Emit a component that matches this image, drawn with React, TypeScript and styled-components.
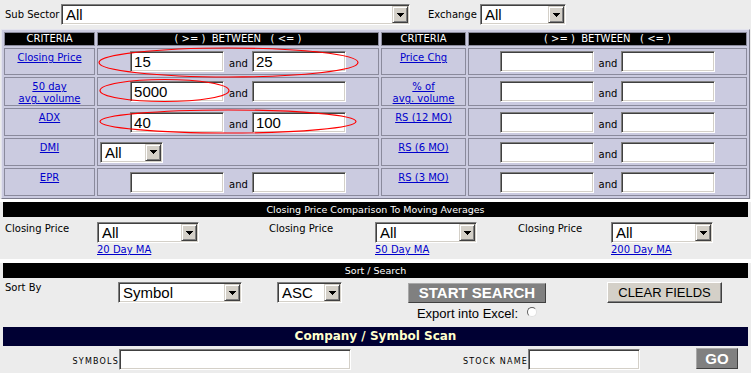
import React from 'react';
import styled, { createGlobalStyle } from 'styled-components';

const FONT_UI = `"DejaVu Sans", Verdana, sans-serif`;
const FONT_FORM = `"Liberation Sans", Arial, sans-serif`;

const GlobalStyle = createGlobalStyle`
  html, body {
    margin: 0;
    padding: 0;
    background: #ececec;
  }
  body {
    font-family: ${FONT_UI};
    font-size: 10px;
    color: #000;
  }
`;

const Page = styled.div`
  position: relative;
  width: 751px;
  height: 373px;
  overflow: hidden;
  background: #ececec;
`;

/* ---------- form widgets ---------- */

const SelectBox = styled.div<{ $w: number }>`
  box-sizing: border-box;
  width: ${(p) => p.$w}px;
  height: 21px;
  padding: 1px;
  display: flex;
  background: #fff;
  border: 1px solid;
  border-color: #808080 #fff #fff #808080;
  box-shadow: inset 1px 1px 0 #404040, inset -1px -1px 0 #d4d0c8;
`;

const SelectValue = styled.span`
  flex: 1;
  padding-left: 3px;
  font-family: ${FONT_FORM};
  font-size: 15px;
  line-height: 17px;
  overflow: hidden;
  white-space: nowrap;
`;

const ArrowButton = styled.span`
  box-sizing: border-box;
  width: 16px;
  height: 17px;
  display: flex;
  align-items: center;
  justify-content: center;
  background: #d4d0c8;
  border: 1px solid;
  border-color: #d4d0c8 #404040 #404040 #d4d0c8;
  box-shadow: inset 1px 1px 0 #fff, inset -1px -1px 0 #808080;
`;

const TextBox = styled.input<{ $w: number }>`
  box-sizing: border-box;
  width: ${(p) => p.$w}px;
  height: 21px;
  margin: 0;
  padding: 0 3px;
  background: #fff;
  border: 1px solid;
  border-color: #808080 #fff #fff #808080;
  box-shadow: inset 1px 1px 0 #404040, inset -1px -1px 0 #d4d0c8;
  font-family: ${FONT_FORM};
  font-size: 15px;
  color: #000;
  outline: none;
`;

const ArrowIcon = () => (
  <svg width="7" height="4" viewBox="0 0 7 4" shapeRendering="crispEdges">
    <path d="M0 0h7v1H0zM1 1h5v1H1zM2 2h3v1H2zM3 3h1v1H3z" fill="#000" />
  </svg>
);

const Dropdown: React.FC<{ value: string; width: number }> = ({ value, width }) => (
  <SelectBox $w={width}>
    <SelectValue>{value}</SelectValue>
    <ArrowButton>
      <ArrowIcon />
    </ArrowButton>
  </SelectBox>
);

/* ---------- top filter bar ---------- */

const TopBar = styled.div`
  display: flex;
  align-items: center;
  height: 29px;
  padding-left: 5px;
`;

const TopLabel = styled.span<{ $w: number; $ml?: number }>`
  width: ${(p) => p.$w}px;
  margin-left: ${(p) => p.$ml ?? 0}px;
  font-size: 10px;
  white-space: nowrap;
`;

/* ---------- criteria table ---------- */

const CriteriaWrap = styled.div`
  position: relative;
  padding-left: 1px;
`;

const CriteriaTable = styled.table`
  width: 749px;
  table-layout: fixed;
  border-collapse: separate;
  border-spacing: 2px;
  background: #cbcbe0;
  border: 1px solid;
  border-color: #e4e4ee #7c7c8c #7c7c8c #e4e4ee;
`;

const HeadCell = styled.th<{ $w: number }>`
  box-sizing: border-box;
  width: ${(p) => p.$w}px;
  height: 14px;
  padding: 0;
  background: #000;
  color: #fff;
  font-weight: normal;
  font-size: 10px;
  line-height: 12px;
  text-align: center;
  white-space: pre;
  border: 1px solid #8a8a9c;
`;

const Row = styled.tr<{ $h: number }>`
  height: ${(p) => p.$h}px;
`;

const LabelCell = styled.td`
  padding: 3px 2px 0;
  vertical-align: top;
  text-align: center;
  font-size: 10px;
  line-height: 12px;
  border: 1px solid #8a8a9c;
`;

const RangeCell = styled.td<{ $left?: boolean }>`
  padding: 0 0 0 ${(p) => (p.$left ? 2 : 0)}px;
  vertical-align: middle;
  border: 1px solid #8a8a9c;
`;

const Range = styled.div`
  display: flex;
  justify-content: center;
  align-items: baseline;
`;

const And = styled.span`
  margin: 0 4px 0 5px;
  font-size: 10px;
`;

const Link = styled.a`
  color: #0000cc;
  text-decoration: underline;
  font-size: 10px;
  line-height: 12px;
`;

const MaLink = styled(Link)`
  margin-top: 1px;
`;

const Ellipses = styled.svg`
  position: absolute;
  top: 0;
  left: 0;
  pointer-events: none;
`;

/* ---------- section bars ---------- */

const WhiteGap = styled.div<{ $h: number }>`
  height: ${(p) => p.$h}px;
  background: #fff;
`;

const SectionBar = styled.div`
  margin: 0 3px;
  height: 15px;
  background: #000;
  color: #fff;
  text-align: center;
  font-size: 9.5px;
  line-height: 15px;
`;

const ScanBar = styled.div`
  margin: 0 3px;
  height: 19px;
  background: #000033;
  color: #ffffcc;
  text-align: center;
  font-size: 12px;
  font-weight: bold;
  line-height: 19px;
`;

/* ---------- moving average row ---------- */

const MaSection = styled.div`
  display: grid;
  grid-template-columns: 92px 172px 106px 143px 93px 1fr;
  align-items: start;
  height: 42px;
  box-sizing: border-box;
  padding: 5px 0 3px 5px;
`;

const PlainLabel = styled.span`
  padding-top: 1px;
  font-size: 10px;
  line-height: 12px;
  white-space: nowrap;
`;

const MaCell = styled.div`
  display: flex;
  flex-direction: column;
  align-items: flex-start;
`;

/* ---------- sort / search ---------- */

const SortSection = styled.div`
  display: grid;
  grid-template-columns: 113px 159px 131px 138px 61px 115px;
  grid-template-rows: 21px auto;
  row-gap: 3px;
  align-items: start;
  height: 49px;
  box-sizing: border-box;
  padding: 4px 0 0 5px;
`;

const SortLabel = styled.span`
  font-size: 10px;
  line-height: 12px;
`;

const GreyButton = styled.button<{ $w: number }>`
  box-sizing: border-box;
  width: ${(p) => p.$w}px;
  height: 20px;
  margin: 1px 0 0;
  padding: 0;
  background: #808080;
  color: #fff;
  font-family: ${FONT_FORM};
  font-size: 15px;
  font-weight: bold;
  line-height: 18px;
  border: 1px solid;
  border-color: #a8a8a8 #404040 #404040 #a8a8a8;
`;

const FaceButton = styled.button`
  box-sizing: border-box;
  width: 115px;
  height: 21px;
  margin: 0;
  padding: 0;
  background: #d4d0c8;
  color: #000;
  font-family: ${FONT_FORM};
  font-size: 13px;
  line-height: 19px;
  border: 1px solid;
  border-color: #fff #404040 #404040 #fff;
  box-shadow: inset -1px -1px 0 #808080;
`;

const ExportLine = styled.div`
  grid-column: 4;
  grid-row: 2;
  justify-self: center;
  display: flex;
  align-items: flex-start;
  gap: 9px;
  font-family: ${FONT_FORM};
  font-size: 13px;
  line-height: 15px;
  white-space: nowrap;
`;

const Radio = styled.span`
  box-sizing: border-box;
  width: 10px;
  height: 10px;
  margin-top: 1px;
  border-radius: 50%;
  background: #fff;
  border: 1px solid;
  border-color: #606060 #e0e0e0 #e0e0e0 #606060;
`;

/* ---------- symbol scan ---------- */

const ScanSection = styled.div`
  display: grid;
  grid-template-columns: 119px 232px 177px 112px 56px 42px;
  height: 28px;
  box-sizing: border-box;
  padding-top: 3px;
`;

const CapsLabel = styled.span`
  justify-self: end;
  align-self: end;
  margin-bottom: 7px;
  font-size: 8px;
  line-height: 10px;
  letter-spacing: 1.2px;
  white-space: nowrap;
`;

const GoButton = styled(GreyButton)`
  grid-column: 6;
  height: 21px;
  margin-top: -1px;
`;

type Criterion = {
  label: string[];
  from?: string;
  to?: string;
  dropdown?: boolean;
};

const leftCriteria: Criterion[] = [
  { label: ['Closing Price'], from: '15', to: '25' },
  { label: ['50 day', 'avg. volume'], from: '5000', to: '' },
  { label: ['ADX'], from: '40', to: '100' },
  { label: ['DMI'], dropdown: true },
  { label: ['EPR'], from: '', to: '' },
];

const rightCriteria: Criterion[] = [
  { label: ['Price Chg'] },
  { label: ['% of', 'avg. volume'] },
  { label: ['RS (12 MO)'] },
  { label: ['RS (6 MO)'] },
  { label: ['RS (3 MO)'] },
];

const rowHeights = [27, 28, 28, 28, 28];

const BETWEEN = '( >= )  BETWEEN   ( <= )';

const CriterionLabel: React.FC<{ lines: string[] }> = ({ lines }) => (
  <LabelCell>
    <Link href="#">
      {lines.map((line, i) => (
        <React.Fragment key={line}>
          {i > 0 && <br />}
          {line}
        </React.Fragment>
      ))}
    </Link>
  </LabelCell>
);

const RangeInputs: React.FC<{ from?: string; to?: string }> = ({ from = '', to = '' }) => (
  <Range>
    <TextBox $w={94} defaultValue={from} />
    <And>and</And>
    <TextBox $w={94} defaultValue={to} />
  </Range>
);

const maColumns = [
  { label: 'Closing Price', link: '20 Day MA' },
  { label: 'Closing Price', link: '50 Day MA' },
  { label: 'Closing Price', link: '200 Day MA' },
];

const App: React.FC = () => {
  return (
    <Page>
      <GlobalStyle />
      <TopBar>
        <TopLabel $w={56}>Sub Sector</TopLabel>
        <Dropdown value="All" width={349} />
        <TopLabel $w={52} $ml={18}>
          Exchange
        </TopLabel>
        <Dropdown value="All" width={86} />
      </TopBar>

      <CriteriaWrap>
        <CriteriaTable>
          <thead>
            <tr>
              <HeadCell $w={91}>CRITERIA</HeadCell>
              <HeadCell $w={282}>{BETWEEN}</HeadCell>
              <HeadCell $w={85}>CRITERIA</HeadCell>
              <HeadCell $w={279}>{BETWEEN}</HeadCell>
            </tr>
          </thead>
          <tbody>
            {leftCriteria.map((left, i) => (
              <Row key={left.label[0]} $h={rowHeights[i]}>
                <CriterionLabel lines={left.label} />
                {left.dropdown ? (
                  <RangeCell $left>
                    <Dropdown value="All" width={63} />
                  </RangeCell>
                ) : (
                  <RangeCell>
                    <RangeInputs from={left.from} to={left.to} />
                  </RangeCell>
                )}
                <CriterionLabel lines={rightCriteria[i].label} />
                <RangeCell>
                  <RangeInputs />
                </RangeCell>
              </Row>
            ))}
          </tbody>
        </CriteriaTable>
        <Ellipses width="751" height="170">
          <g fill="none" stroke="#ff0000" strokeWidth="1.2">
            <ellipse cx="228.5" cy="33.5" rx="129.5" ry="14.5" />
            <ellipse cx="164.5" cy="61.5" rx="64.5" ry="11" />
            <ellipse cx="228" cy="92.5" rx="128" ry="11.5" />
          </g>
        </Ellipses>
      </CriteriaWrap>

      <WhiteGap $h={3} />
      <SectionBar>Closing Price Comparison To Moving Averages</SectionBar>
      <MaSection>
        {maColumns.map((col) => (
          <React.Fragment key={col.link}>
            <PlainLabel>{col.label}</PlainLabel>
            <MaCell>
              <Dropdown value="All" width={102} />
              <MaLink href="#">{col.link}</MaLink>
            </MaCell>
          </React.Fragment>
        ))}
      </MaSection>

      <WhiteGap $h={4} />
      <SectionBar>Sort / Search</SectionBar>
      <SortSection>
        <SortLabel>Sort By</SortLabel>
        <Dropdown value="Symbol" width={124} />
        <Dropdown value="ASC" width={65} />
        <GreyButton $w={138}>START SEARCH</GreyButton>
        <span />
        <FaceButton>CLEAR FIELDS</FaceButton>
        <ExportLine>
          Export into Excel:
          <Radio />
        </ExportLine>
      </SortSection>

      <ScanBar>Company / Symbol Scan</ScanBar>
      <ScanSection>
        <CapsLabel>SYMBOLS</CapsLabel>
        <TextBox $w={232} />
        <CapsLabel>STOCK NAME</CapsLabel>
        <TextBox $w={112} />
        <GoButton $w={42}>GO</GoButton>
      </ScanSection>
    </Page>
  );
};

export default App;
